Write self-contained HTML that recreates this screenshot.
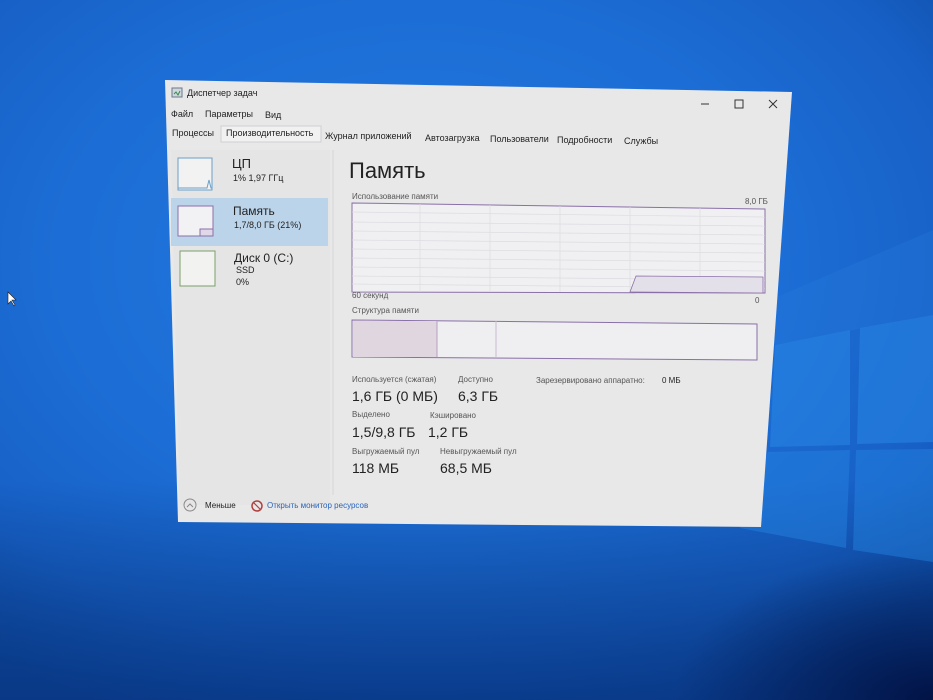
<!DOCTYPE html>
<html><head><meta charset="utf-8"><style>
html,body{margin:0;padding:0}
body{width:933px;height:700px;overflow:hidden;position:relative;font-family:"Liberation Sans","DejaVu Sans",sans-serif;
background:radial-gradient(ellipse 700px 500px at 420px 260px,#2479dc 0%,#1c6ed6 50%,#1760c6 80%,#0f4ea8 100%);}
.t{position:absolute;white-space:nowrap;color:#222;font-size:9px;line-height:1}
.s{font-size:8px;color:#555}
.v{font-size:14px;color:#222}
</style></head><body>
<svg width="933" height="700" style="position:absolute;left:0;top:0">
<defs>
<linearGradient id="bm" x1="0" y1="0" x2="0" y2="1"><stop offset="0" stop-color="#06306f" stop-opacity="0"/><stop offset="1" stop-color="#062f78" stop-opacity=".7"/></linearGradient>
<radialGradient id="rb" cx="1" cy="1" r="0.6"><stop offset="0" stop-color="#000c3a" stop-opacity=".85"/><stop offset="1" stop-color="#001040" stop-opacity="0"/></radialGradient>
</defs>
<rect x="0" y="480" width="933" height="220" fill="url(#bm)"/>
<rect x="500" y="450" width="433" height="250" fill="url(#rb)"/>
<polygon points="775,345 850,330 850,445 770,447" fill="#2a8ae6" opacity=".5"/>
<polygon points="860,328 933,315 933,442 857,444" fill="#2a8ae6" opacity=".5"/>
<polygon points="768,452 850,450 846,548 740,528" fill="#2586e2" opacity=".45"/>
<polygon points="856,450 933,449 933,562 853,550" fill="#2586e2" opacity=".45"/>
<polygon points="700,330 933,230 933,315 775,345" fill="#2a80de" opacity=".25"/>
<polygon points="165,80 792,92 761,527 178,522" fill="#e8e8e9"/>
<polygon points="171,150 330,150 330,505 180,505" fill="#e5e5e6"/>
<rect x="171" y="198" width="157" height="48" fill="#bcd4ea"/>
<line x1="333" y1="150" x2="333" y2="495" stroke="#d6d6d8"/>
<rect x="221" y="126" width="100" height="16" fill="#f1f1f2" stroke="#cfcfd2"/>
<rect x="178" y="158" width="34" height="32" fill="#f2f2f2" stroke="#6aa0c8"/>
<polyline points="178,188 207,188 209,180 211,188 212,188" fill="none" stroke="#6aa0c8"/>
<rect x="178" y="206" width="35" height="30" fill="#f2f2f4" stroke="#8a6fa8"/>
<rect x="200" y="229" width="13" height="7" fill="#e0d8e8" stroke="#8a6fa8"/>
<rect x="180" y="251" width="35" height="35" fill="#f2f2f0" stroke="#7aa06a"/>
<polygon points="352,203 765,209 765,293 352,292" fill="#f0f0f2" stroke="#8a6fa8"/>
<g stroke="#dcdce2" stroke-width=".7">
<line x1="352" y1="212" x2="765" y2="217"/><line x1="352" y1="222" x2="765" y2="226"/><line x1="352" y1="231" x2="765" y2="235"/><line x1="352" y1="240" x2="765" y2="244"/><line x1="352" y1="249" x2="765" y2="253"/><line x1="352" y1="258" x2="765" y2="262"/><line x1="352" y1="267" x2="765" y2="271"/><line x1="352" y1="276" x2="765" y2="280"/><line x1="352" y1="284" x2="765" y2="288"/>
<line x1="420" y1="204" x2="420" y2="292"/><line x1="490" y1="205" x2="490" y2="292"/><line x1="560" y1="206" x2="560" y2="292"/><line x1="630" y1="207" x2="630" y2="292"/><line x1="700" y1="208" x2="700" y2="293"/>
</g>
<polygon points="630,292 636,276 763,277 763,293" fill="#e4e0ea" stroke="#8a6fa8" stroke-width=".8"/>
<polygon points="352,320 757,324 757,360 352,357" fill="#efeff1" stroke="#8a6fa8"/>
<rect x="353" y="321" width="84" height="36" fill="#e0d6e0"/>
<line x1="437" y1="321" x2="437" y2="357" stroke="#b8a0c0"/>
<line x1="496" y1="321" x2="496" y2="358" stroke="#c8b8d0"/>
<circle cx="190" cy="505" r="6" fill="none" stroke="#888"/>
<polyline points="187,507 190,504 193,507" fill="none" stroke="#888"/>
<circle cx="257" cy="506" r="5" fill="none" stroke="#b04040" stroke-width="1.5"/>
<line x1="254" y1="503" x2="260" y2="509" stroke="#b04040" stroke-width="1.2"/>
<rect x="172" y="88" width="10" height="9" fill="#cfd8de" stroke="#6a7a88"/>
<polyline points="174,94 176,92 178,95 180,91" fill="none" stroke="#3a8a4a"/>
<line x1="701" y1="104" x2="709" y2="104" stroke="#333"/>
<rect x="735" y="100" width="8" height="8" fill="none" stroke="#333"/>
<path d="M769 100 L777 108 M777 100 L769 108" stroke="#333"/>
<path d="M8 292 L8 304 L11 301 L14 306 L15 305 L12 300 L16 300 Z" fill="#fff" stroke="#222" stroke-width=".6"/>
</svg>
<div class="t" style="left:187px;top:89px">Диспетчер задач</div>
<div class="t" style="left:171px;top:110px">Файл</div>
<div class="t" style="left:205px;top:110px">Параметры</div>
<div class="t" style="left:265px;top:111px">Вид</div>
<div class="t" style="left:172px;top:129px">Процессы</div>
<div class="t" style="left:226px;top:129px">Производительность</div>
<div class="t" style="left:325px;top:132px">Журнал приложений</div>
<div class="t" style="left:425px;top:134px">Автозагрузка</div>
<div class="t" style="left:490px;top:135px">Пользователи</div>
<div class="t" style="left:557px;top:136px">Подробности</div>
<div class="t" style="left:624px;top:137px">Службы</div>
<div class="t" style="left:232px;top:157px;font-size:13px">ЦП</div>
<div class="t" style="left:233px;top:174px">1% 1,97 ГГц</div>
<div class="t" style="left:233px;top:205px;font-size:12px">Память</div>
<div class="t" style="left:234px;top:221px">1,7/8,0 ГБ (21%)</div>
<div class="t" style="left:234px;top:252px;font-size:12px">Диск 0 (C:)</div>
<div class="t" style="left:236px;top:266px">SSD</div>
<div class="t" style="left:236px;top:278px">0%</div>
<div class="t" style="left:349px;top:160px;font-size:22px">Память</div>
<div class="t s" style="left:352px;top:193px">Использование памяти</div>
<div class="t s" style="left:745px;top:198px">8,0 ГБ</div>
<div class="t s" style="left:352px;top:292px">60 секунд</div>
<div class="t s" style="left:755px;top:297px">0</div>
<div class="t s" style="left:352px;top:307px">Структура памяти</div>
<div class="t s" style="left:352px;top:376px">Используется (сжатая)</div>
<div class="t s" style="left:458px;top:376px">Доступно</div>
<div class="t s" style="left:536px;top:377px">Зарезервировано аппаратно:</div>
<div class="t s" style="left:662px;top:377px;color:#222">0 МБ</div>
<div class="t v" style="left:352px;top:389px">1,6 ГБ (0 МБ)</div>
<div class="t v" style="left:458px;top:389px">6,3 ГБ</div>
<div class="t s" style="left:352px;top:411px">Выделено</div>
<div class="t s" style="left:430px;top:412px">Кэшировано</div>
<div class="t v" style="left:352px;top:425px">1,5/9,8 ГБ</div>
<div class="t v" style="left:428px;top:425px">1,2 ГБ</div>
<div class="t s" style="left:352px;top:448px">Выгружаемый пул</div>
<div class="t s" style="left:440px;top:448px">Невыгружаемый пул</div>
<div class="t v" style="left:352px;top:461px">118 МБ</div>
<div class="t v" style="left:440px;top:461px">68,5 МБ</div>
<div class="t" style="left:205px;top:502px;font-size:8px">Меньше</div>
<div class="t" style="left:267px;top:502px;font-size:8px;color:#2a64b8">Открыть монитор ресурсов</div>
</body></html>
